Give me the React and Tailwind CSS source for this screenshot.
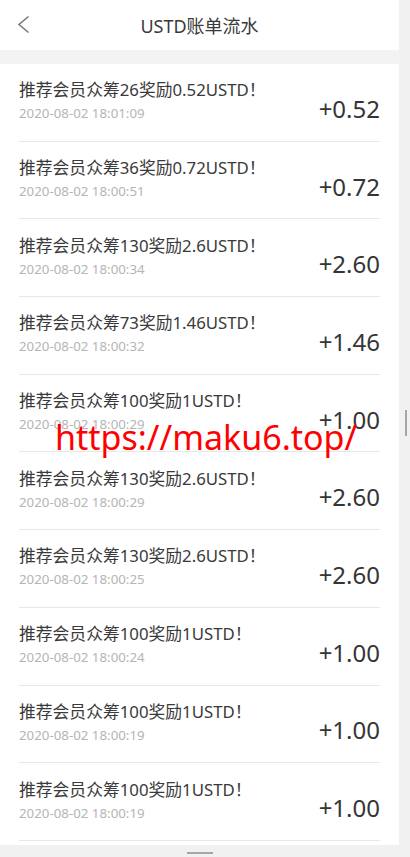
import React from 'react';

const records = [
  { n: 26, r: '0.52', time: '2020-08-02 18:01:09', amount: '+0.52' },
  { n: 36, r: '0.72', time: '2020-08-02 18:00:51', amount: '+0.72' },
  { n: 130, r: '2.6', time: '2020-08-02 18:00:34', amount: '+2.60' },
  { n: 73, r: '1.46', time: '2020-08-02 18:00:32', amount: '+1.46' },
  { n: 100, r: '1', time: '2020-08-02 18:00:29', amount: '+1.00' },
  { n: 130, r: '2.6', time: '2020-08-02 18:00:29', amount: '+2.60' },
  { n: 130, r: '2.6', time: '2020-08-02 18:00:25', amount: '+2.60' },
  { n: 100, r: '1', time: '2020-08-02 18:00:24', amount: '+1.00' },
  { n: 100, r: '1', time: '2020-08-02 18:00:19', amount: '+1.00' },
  { n: 100, r: '1', time: '2020-08-02 18:00:19', amount: '+1.00' },
];

export default function App() {
  return (
    <div
      className="relative flex w-[410px] h-[857px] overflow-hidden bg-white"
      style={{ fontFamily: '"Noto Sans", "Noto Sans CJK SC", sans-serif' }}
    >
      <div className="flex flex-col w-[399px] h-full">
        {/* Header */}
        <div className="relative flex items-center justify-center h-[50px] bg-white">
          <svg className="absolute left-[17px] top-[15px]" width="13" height="19" viewBox="0 0 13 19">
            <path d="M11.5 1.5 L2 9.5 L11.5 17.5" fill="none" stroke="#7a7a7a" strokeWidth="1.6" />
          </svg>
          <h1 className="text-[18px] leading-none text-[#3a3a3a] mt-[1px]">USTD账单流水</h1>
        </div>
        <div className="h-[14px] bg-[#f3f3f4]" />

        {/* List */}
        <div className="flex-1 bg-white">
          {records.map((item, i) => (
            <div
              key={i}
              className="mx-[19px] h-[77.7px] flex items-center justify-between border-b border-[#e8e8e8]"
            >
              <div className="flex flex-col mb-[3px]">
                <span className="text-[16.8px] leading-[22px] text-[#3a3a3a]">
                  推荐会员众筹{item.n}奖励{item.r}USTD！
                </span>
                <span className="text-[13.3px] leading-[18px] text-[#b5b5b5] mt-[3px]">{item.time}</span>
              </div>
              <span className="text-[24px] leading-[32px] text-[#353535] mt-[13px]">{item.amount}</span>
            </div>
          ))}
          <div className="h-[4px]" />
        </div>

        {/* Bottom scrollbar */}
        <div className="h-[12px] bg-[#f1f1f2] flex justify-center items-end pb-[3px]">
          <div className="w-[26px] h-[2px] bg-[#a6a6a6] ml-[1px]" />
        </div>
      </div>

      {/* Right scrollbar */}
      <div className="w-[11px] h-full bg-[#f1f1f2] pt-[410px] pl-[6px]">
        <div className="w-[2px] h-[26px] bg-[#a6a6a6]" />
      </div>

      {/* Watermark */}
      <div className="absolute left-[55px] top-[420px] text-[34px] leading-none text-[#ff0000] pointer-events-none">
        https://maku6.top/
      </div>
    </div>
  );
}
